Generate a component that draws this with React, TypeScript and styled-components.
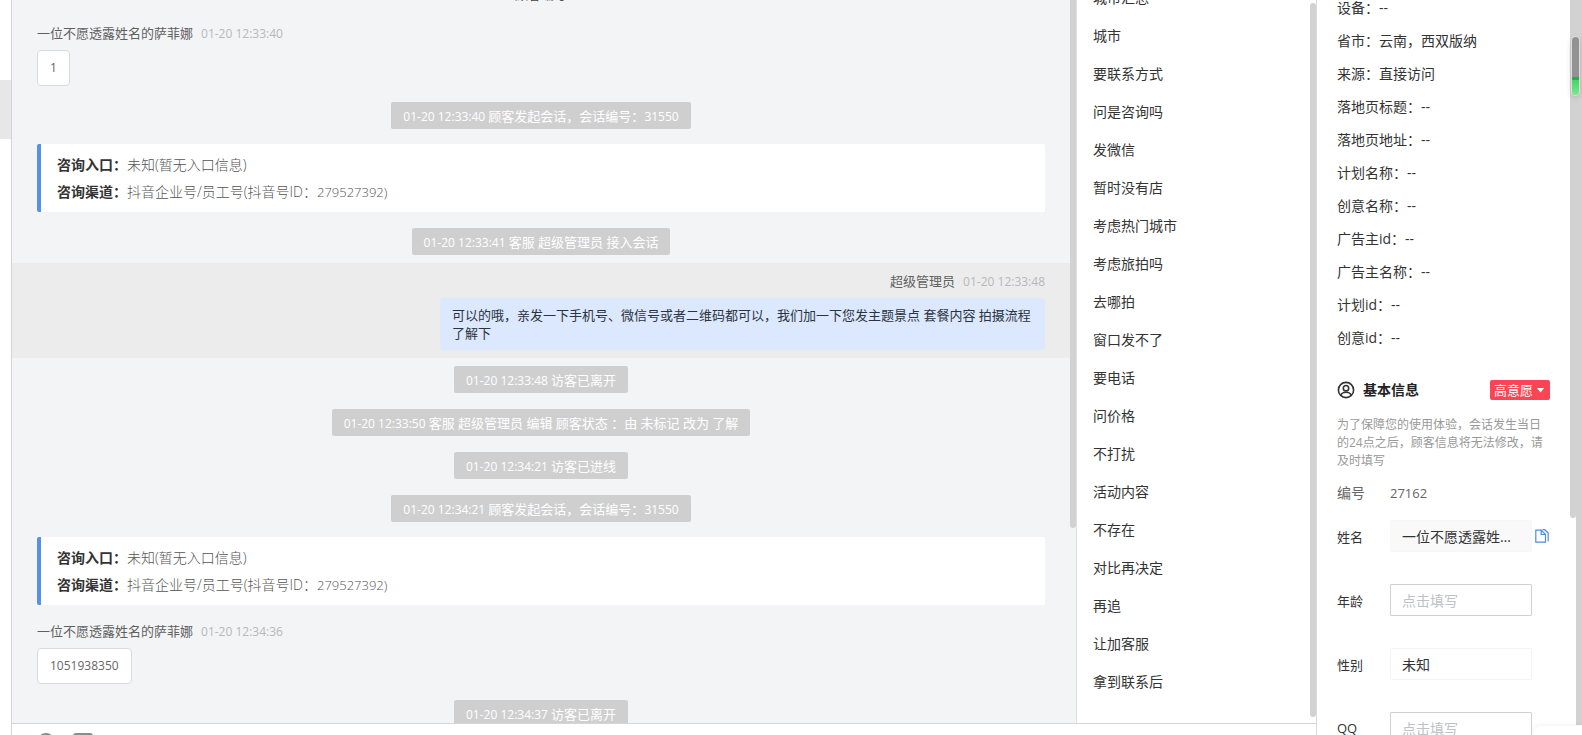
import React from "react";
import styled, { createGlobalStyle, css } from "styled-components";

const Global = createGlobalStyle`
  * { box-sizing: border-box; }
  body {
    margin: 0;
    background: #fff;
    color: #333;
    font-family: "Open Sans", "Noto Sans CJK SC", sans-serif;
    font-size: 14px;
  }
  button, input, select { font: inherit; color: inherit; }
`;

const Page = styled.div`
  display: flex;
  height: 100vh;
  overflow: hidden;
`;

const Rail = styled.aside`
  flex: 0 0 12px;
  padding-top: 80px;
  border-right: 1px solid #d4d4d6;
`;

const RailItem = styled.div`
  height: 59px;
  background: #e7e7e7;
`;

const Workspace = styled.main`
  flex: 1;
  min-width: 0;
  display: flex;
  flex-direction: column;
`;

const Columns = styled.div`
  flex: 1;
  min-height: 0;
  display: flex;
`;

const Chat = styled.section`
  flex: 1;
  min-width: 0;
  display: flex;
  overflow: hidden;
  background: #f3f4f6;
`;

const Thread = styled.div`
  flex: 1;
  min-width: 0;
  margin-top: -16px;
`;

const Track = styled.div<{ $inset?: number }>`
  flex: 0 0 6px;
  padding-top: ${(p) => p.$inset ?? 0}px;
`;

const Thumb = styled.div<{ $length: string; $open?: boolean }>`
  height: ${(p) => p.$length};
  background: #d2d2d3;
  border-radius: ${(p) => (p.$open ? "0 0 3px 3px" : "3px")};
`;

const Cut = styled.div`
  height: 31px;
  padding-top: 1px;
  text-align: center;
  font-size: 13px;
  line-height: 18px;
  color: #444;
`;

const EventRow = styled.div`
  display: flex;
  justify-content: center;
  padding: 8px 25px;
`;

const Pill = styled.div`
  height: 27px;
  padding: 0 12px;
  border-radius: 2px;
  background: #cfcfd0;
  color: #fff;
  font-size: 13px;
  line-height: 28px;
`;

const Num = styled.span`
  font-size: 12px;
  line-height: 1;
`;

const MessageRow = styled.article<{ $own?: boolean }>`
  display: flex;
  flex-direction: column;
  align-items: flex-start;
  gap: 6px;
  padding: 8px 25px;
  ${(p) =>
    p.$own &&
    css`
      align-items: flex-end;
      background: #ececed;
    `}
`;

const Sender = styled.header`
  display: flex;
  gap: 8px;
  font-size: 13px;
  line-height: 21px;
  color: #606060;
`;

const Time = styled.time`
  font-size: 12px;
  color: #b6b8bb;
`;

const Bubble = styled.div<{ $own?: boolean }>`
  padding: 8px 12px;
  border: 1px solid #d9dadc;
  border-radius: 4px;
  background: #fff;
  color: #666;
  font-size: 12px;
  line-height: 18px;
  ${(p) =>
    p.$own &&
    css`
      max-width: 605px;
      border: 0;
      background: #dbe8fd;
      color: #2c3340;
      font-size: 13px;
    `}
`;

const SourceRow = styled.div`
  padding: 7px 25px 8px;
`;

const SourceCard = styled.dl`
  margin: 0;
  padding: 7px 16px;
  border-left: 4px solid #5590ea;
  border-radius: 2px;
  background: #fff;
  line-height: 27px;
`;

const SourceLine = styled.div`
  display: flex;
  height: 27px;
  dt { font-weight: 700; }
  dd { margin: 0; color: #555; font-weight: 300; }
`;

const Digits = styled.span`
  font-size: 13px;
  line-height: 1;
`;

const Composer = styled.footer`
  flex: 0 0 12px;
  display: flex;
  gap: 18px;
  overflow: hidden;
  padding: 8px 25px 0;
  border-top: 1px solid #d4d5d8;
`;

const ToolButton = styled.button`
  height: 20px;
  padding: 0;
  border: 0;
  background: none;
  svg { display: block; }
`;

const Replies = styled.nav`
  flex: 0 0 240px;
  display: flex;
  overflow: hidden;
  border-left: 1px solid #dfe0e2;
`;

const ReplyList = styled.ul`
  flex: 1;
  margin: -22px 0 0;
  padding: 0;
  list-style: none;
`;

const ReplyButton = styled.button`
  display: block;
  width: 100%;
  height: 38px;
  padding: 0 16px;
  border: 0;
  background: none;
  text-align: left;
`;

const Customer = styled.aside`
  flex: 0 0 260px;
  display: flex;
  overflow: hidden;
  border-left: 1px solid #d8d9db;
`;

const Details = styled.div`
  flex: 1;
  min-width: 0;
  padding: 0 20px;
`;

const VisitList = styled.dl`
  margin: -9px 0 26px;
  line-height: 33px;
`;

const VisitLine = styled.div`
  display: flex;
  dd { margin: 0; }
`;

const SectionHead = styled.header`
  display: flex;
  align-items: center;
  justify-content: space-between;
  margin-bottom: 16px;
`;

const SectionTitle = styled.h2`
  display: flex;
  align-items: center;
  gap: 8px;
  margin: 0;
  font-size: 14px;
  line-height: 20px;
  color: #222;
`;

const Intent = styled.button`
  display: flex;
  align-items: center;
  gap: 4px;
  height: 20px;
  padding: 0 6px 0 4px;
  border: 0;
  border-radius: 2px;
  background: #fb4556;
  color: #fff;
  font-size: 13px;
  line-height: 20px;
`;

const Note = styled.p`
  margin: 0 0 12px;
  color: #999;
  font-size: 12px;
  line-height: 18px;
`;

const IdLine = styled.div`
  display: flex;
  margin-bottom: 16px;
  line-height: 22px;
  color: #666;
`;

const Caption = styled.span`
  flex: 0 0 53px;
`;

const IdValue = styled.span`
  font-size: 13px;
`;

const Field = styled.div`
  display: flex;
  align-items: center;
  margin-bottom: 32px;
`;

const Label = styled.label`
  flex: 0 0 53px;
  font-size: 13px;
`;

const Input = styled.input<{ $filled?: boolean }>`
  width: 142px;
  height: 32px;
  padding: 0 11px;
  border: 1px solid #d0d1d3;
  border-radius: 1px;
  background: #fff;
  text-overflow: ellipsis;
  ${(p) =>
    p.$filled &&
    css`
      border-color: #f7f7f8;
      background: #f9f9fa;
    `}
  &::placeholder { color: #c0c2c6; opacity: 1; }
`;

const Select = styled.select`
  width: 142px;
  height: 32px;
  padding: 0 11px;
  border: 1px solid #f3f3f4;
  border-radius: 1px;
  background: #fff;
  appearance: none;
`;

const CopyButton = styled.button`
  margin-left: 3px;
  padding: 0;
  border: 0;
  background: none;
  svg { display: block; }
`;

const WindowTrack = styled.div`
  flex: 0 0 6px;
  height: calc(100vh - 10px);
  background: #d2d2d2;
`;

const Meter = styled.div`
  position: absolute;
  top: 37px;
  right: 3px;
  width: 7px;
  height: 58px;
  border-radius: 4px;
  background: linear-gradient(#929292 0 40px, #2fa84c 40px 43px, #45d565 43px, #7ce88c);
  box-shadow: 0 0 0 1px #dedede, 0 2px 6px rgba(0, 0, 0, 0.2);
`;

const Popup = styled.div`
  position: absolute;
  right: 0;
  bottom: 0;
  width: 48px;
  height: 9px;
  border-radius: 6px 0 0 0;
  background: #fff;
  box-shadow: 0 0 6px rgba(0, 0, 0, 0.08);
`;

const replies = [
  "城市汇总", "城市", "要联系方式", "问是咨询吗", "发微信", "暂时没有店", "考虑热门城市",
  "考虑旅拍吗", "去哪拍", "窗口发不了", "要电话", "问价格", "不打扰", "活动内容", "不存在",
  "对比再决定", "再追", "让加客服", "拿到联系后",
];

const visit = [
  ["设备", "--"], ["省市", "云南，西双版纳"], ["来源", "直接访问"], ["落地页标题", "--"],
  ["落地页地址", "--"], ["计划名称", "--"], ["创意名称", "--"], ["广告主id", "--"],
  ["广告主名称", "--"], ["计划id", "--"], ["创意id", "--"],
];

function Event({ time, children }: { time: string; children: React.ReactNode }) {
  return (
    <EventRow>
      <Pill><Num>01-20 {time} </Num>{children}</Pill>
    </EventRow>
  );
}

function Message({ name, time, own, children }: { name: string; time: string; own?: boolean; children: React.ReactNode }) {
  return (
    <MessageRow $own={own}>
      <Sender><span>{name}</span><Time>01-20 {time}</Time></Sender>
      <Bubble $own={own}>{children}</Bubble>
    </MessageRow>
  );
}

function Source() {
  return (
    <SourceRow>
      <SourceCard>
        <SourceLine><dt>咨询入口：</dt><dd>未知(暂无入口信息)</dd></SourceLine>
        <SourceLine><dt>咨询渠道：</dt><dd>抖音企业号/员工号(抖音号ID：<Digits>279527392)</Digits></dd></SourceLine>
      </SourceCard>
    </SourceRow>
  );
}

export default function App() {
  return (
    <>
      <Global />
      <Page>
        <Rail><RailItem /></Rail>
        <Workspace>
          <Columns>
            <Chat>
              <Thread>
                <Cut>顾客编号</Cut>
                <Message name="一位不愿透露姓名的萨菲娜" time="12:33:40">1</Message>
                <Event time="12:33:40">顾客发起会话，会话编号：<Num>31550</Num></Event>
                <Source />
                <Event time="12:33:41">客服 超级管理员 接入会话</Event>
                <Message own name="超级管理员" time="12:33:48">
                  可以的哦，亲发一下手机号、微信号或者二维码都可以，我们加一下您发主题景点 套餐内容 拍摄流程了解下
                </Message>
                <Event time="12:33:48">访客已离开</Event>
                <Event time="12:33:50">客服 超级管理员 编辑 顾客状态 ：由 未标记 改为 了解</Event>
                <Event time="12:34:21">访客已进线</Event>
                <Event time="12:34:21">顾客发起会话，会话编号：<Num>31550</Num></Event>
                <Source />
                <Message name="一位不愿透露姓名的萨菲娜" time="12:34:36">1051938350</Message>
                <Event time="12:34:37">访客已离开</Event>
              </Thread>
              <Track><Thumb $length="73%" $open /></Track>
            </Chat>
            <Replies aria-label="快捷回复">
              <ReplyList>
                {replies.map((r) => (
                  <li key={r}><ReplyButton type="button">{r}</ReplyButton></li>
                ))}
              </ReplyList>
              <Track $inset={3}><Thumb $length="calc(100% - 6px)" /></Track>
            </Replies>
          </Columns>
          <Composer>
            <ToolButton type="button" aria-label="表情">
              <svg width="18" height="20" viewBox="0 0 18 20" fill="none" stroke="#8b8b8d" strokeWidth="2">
                <circle cx="9" cy="10" r="8" />
              </svg>
            </ToolButton>
            <ToolButton type="button" aria-label="图片">
              <svg width="20" height="20" viewBox="0 0 20 20" fill="none" stroke="#8b8b8d" strokeWidth="2">
                <rect x="1" y="2" width="18" height="16" rx="2" />
              </svg>
            </ToolButton>
          </Composer>
        </Workspace>
        <Customer>
          <Details>
            <VisitList>
              {visit.map(([k, v]) => (
                <VisitLine key={k}><dt>{k}：</dt><dd>{v}</dd></VisitLine>
              ))}
            </VisitList>
            <SectionHead>
              <SectionTitle>
                <svg width="18" height="18" viewBox="0 0 18 18" fill="none" stroke="#333" strokeWidth="1.6">
                  <circle cx="9" cy="9" r="7.6" />
                  <circle cx="9" cy="7.200" r="2.700" />
                  <path d="M4 14.300c.6-2.200 2.200-3 5-3s4.400.8 5 3" />
                </svg>
                基本信息
              </SectionTitle>
              <Intent type="button">
                高意愿
                <svg width="7" height="5" viewBox="0 0 7 5" fill="#fff"><path d="M0 0h7L3.500 4.500z" /></svg>
              </Intent>
            </SectionHead>
            <Note>为了保障您的使用体验，会话发生当日的24点之后，顾客信息将无法修改，请及时填写</Note>
            <IdLine><Caption>编号</Caption><IdValue>27162</IdValue></IdLine>
            <Field>
              <Label htmlFor="name">姓名</Label>
              <Input id="name" $filled defaultValue="一位不愿透露姓名的萨菲娜" />
              <CopyButton type="button" aria-label="复制">
                <svg width="14" height="14" viewBox="0 0 14 14" fill="none" stroke="#4f8ae8" strokeWidth="1.200">
                  <path d="M.8 1.200h5.400l4.300 4.300v7.700H.8zM6.200 1.200v4.300h4.300" />
                  <path d="M7.500.7h2.300L13.200 4v8.200" />
                </svg>
              </CopyButton>
            </Field>
            <Field>
              <Label htmlFor="age">年龄</Label>
              <Input id="age" placeholder="点击填写" />
            </Field>
            <Field>
              <Label htmlFor="gender">性别</Label>
              <Select id="gender" defaultValue="未知"><option>未知</option><option>男</option><option>女</option></Select>
            </Field>
            <Field>
              <Label htmlFor="qq">QQ</Label>
              <Input id="qq" placeholder="点击填写" />
            </Field>
          </Details>
          <Track><Thumb $length="518px" $open /></Track>
        </Customer>
        <WindowTrack />
        <Meter />
        <Popup />
      </Page>
    </>
  );
}
